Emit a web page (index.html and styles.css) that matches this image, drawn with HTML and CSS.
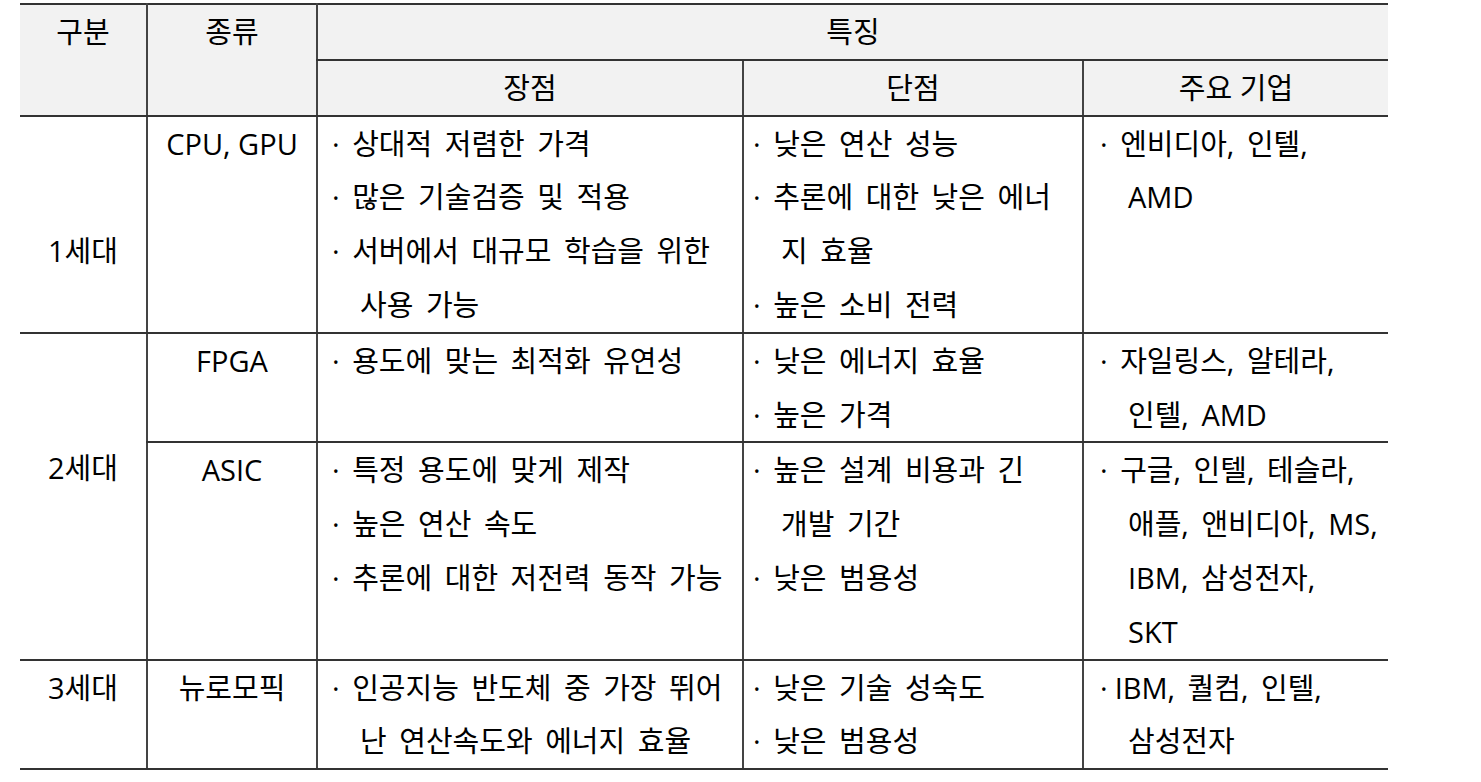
FILE: index.html
```html
<!DOCTYPE html>
<html lang="ko">
<head>
<meta charset="utf-8">
<title>인공지능 반도체 세대별 특징</title>
<link rel="stylesheet" href="styles.css">
</head>
<body>
<table class="chip-table">
  <colgroup>
    <col class="c-gen">
    <col class="c-kind">
    <col class="c-pro">
    <col class="c-con">
    <col class="c-co">
  </colgroup>
  <thead>
    <tr>
      <th rowspan="2" class="first">구분</th>
      <th rowspan="2">종류</th>
      <th colspan="3" class="feature">특징</th>
    </tr>
    <tr>
      <th>장점</th>
      <th>단점</th>
      <th>주요 기업</th>
    </tr>
  </thead>
  <tbody>
    <tr>
      <td class="first gen gen-offset">1세대</td>
      <td class="kind">CPU, GPU</td>
      <td class="list pro">
        <div class="item">· 상대적 저렴한 가격</div>
        <div class="item">· 많은 기술검증 및 적용</div>
        <div class="item">· 서버에서 대규모 학습을 위한<br>사용 가능</div>
      </td>
      <td class="list con">
        <div class="item">· 낮은 연산 성능</div>
        <div class="item">· 추론에 대한 낮은 에너<br>지 효율</div>
        <div class="item">· 높은 소비 전력</div>
      </td>
      <td class="list co">
        <div class="item">· 엔비디아, 인텔,<br>AMD</div>
      </td>
    </tr>
    <tr>
      <td rowspan="2" class="first gen gen-offset">2세대</td>
      <td class="kind">FPGA</td>
      <td class="list pro">
        <div class="item">· 용도에 맞는 최적화 유연성</div>
      </td>
      <td class="list con">
        <div class="item">· 낮은 에너지 효율</div>
        <div class="item">· 높은 가격</div>
      </td>
      <td class="list co">
        <div class="item">· 자일링스, 알테라,<br>인텔, AMD</div>
      </td>
    </tr>
    <tr>
      <td class="kind">ASIC</td>
      <td class="list pro">
        <div class="item">· 특정 용도에 맞게 제작</div>
        <div class="item">· 높은 연산 속도</div>
        <div class="item">· 추론에 대한 저전력 동작 가능</div>
      </td>
      <td class="list con">
        <div class="item">· 높은 설계 비용과 긴<br>개발 기간</div>
        <div class="item">· 낮은 범용성</div>
      </td>
      <td class="list co">
        <div class="item">· 구글, 인텔, 테슬라,<br>애플, 앤비디아, MS,<br>IBM, 삼성전자,<br>SKT</div>
      </td>
    </tr>
    <tr>
      <td class="first gen">3세대</td>
      <td class="kind">뉴로모픽</td>
      <td class="list pro">
        <div class="item">· 인공지능 반도체 중 가장 뛰어<br>난 연산속도와 에너지 효율</div>
      </td>
      <td class="list con">
        <div class="item">· 낮은 기술 성숙도</div>
        <div class="item">· 낮은 범용성</div>
      </td>
      <td class="list co">
        <div class="item">·<span class="gap"></span>IBM, 퀄컴, 인텔,<br>삼성전자</div>
      </td>
    </tr>
  </tbody>
</table>
</body>
</html>
```

FILE: styles.css
```css
html, body {
  margin: 0;
  padding: 0;
  background: #ffffff;
}

body {
  font-family: "Open Sans", "Noto Sans CJK KR", sans-serif;
  font-size: 29px;
  color: #000000;
}

.chip-table {
  margin: 3px 0 0 20px;
  width: 1368px;
  border-collapse: collapse;
  table-layout: fixed;
  border-top: 2px solid #333333;
  border-bottom: 2px solid #333333;
}

.c-gen { width: 127px; }
.c-kind { width: 170px; }
.c-pro { width: 426px; }
.c-con { width: 340px; }
.c-co { width: 305px; }

.chip-table th,
.chip-table td {
  padding: 0;
  line-height: 53.8px;
  vertical-align: top;
  border-left: 2px solid #444444;
  border-bottom: 2px solid #333333;
  white-space: nowrap;
}

.chip-table th {
  background: #f2f2f2;
  font-weight: 400;
  text-align: center;
}

.chip-table .first {
  border-left: none;
}

.chip-table .gen,
.chip-table .kind {
  text-align: center;
}

.chip-table .gen-offset {
  padding-top: 107.6px;
}

.chip-table .list {
  text-align: left;
  word-spacing: 5px;
}

.list .item {
  padding-left: 28px;
  text-indent: -28px;
}

.list .gap {
  display: inline-block;
  width: 7px;
}

.chip-table .pro { padding-left: 14px; }
.chip-table .con { padding-left: 9px; }
.chip-table .co { padding-left: 16px; }
```
